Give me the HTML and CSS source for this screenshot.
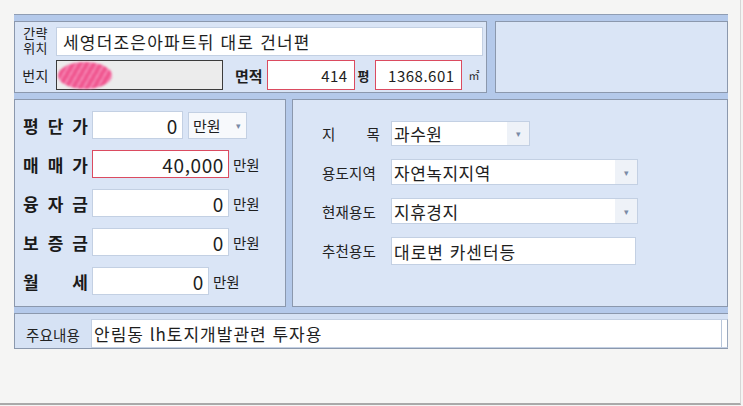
FILE: index.html
```html
<!DOCTYPE html>
<html lang="ko">
<head>
<meta charset="utf-8">
<link rel="stylesheet" href="styles.css">
</head>
<body>
<div class="page">
  <div class="frame">
    <div class="row-top">
      <div class="panel panel-loc">
        <div class="line">
          <div class="lbl-small two"><span class="ln">간략</span><span class="ln">위치</span></div>
          <div class="field field-addr">세영더조은아파트뒤 대로 건너편</div>
        </div>
        <div class="line">
          <div class="lbl-small">번지</div>
          <div class="field field-lot"><span class="blot"></span></div>
          <div class="lbl-bold area">면적</div>
          <div class="field red num w-pyeong">414</div>
          <div class="unit-s">평</div>
          <div class="field red num w-m2">1368.601</div>
          <div class="unit-m2">㎡</div>
        </div>
      </div>
      <div class="panel panel-empty"></div>
    </div>

    <div class="row-mid">
      <div class="panel panel-price">
        <div class="prow">
          <div class="plabel"><span>평</span><span>단</span><span>가</span></div>
          <div class="field num big w-short">0</div>
          <div class="select sel-unit"><span>만원</span><span class="arrow">▾</span></div>
        </div>
        <div class="prow">
          <div class="plabel"><span>매</span><span>매</span><span>가</span></div>
          <div class="field num big red w-long">40,000</div>
          <div class="unit">만원</div>
        </div>
        <div class="prow">
          <div class="plabel"><span>융</span><span>자</span><span>금</span></div>
          <div class="field num big w-long">0</div>
          <div class="unit">만원</div>
        </div>
        <div class="prow">
          <div class="plabel"><span>보</span><span>증</span><span>금</span></div>
          <div class="field num big w-long">0</div>
          <div class="unit">만원</div>
        </div>
        <div class="prow">
          <div class="plabel"><span>월</span><span>세</span></div>
          <div class="field num big w-mid">0</div>
          <div class="unit">만원</div>
        </div>
      </div>

      <div class="panel panel-land">
        <div class="lrow">
          <div class="llabel"><span>지</span><span>목</span></div>
          <div class="select sel-a"><span class="sel-text">과수원</span><span class="arrow-box">▾</span></div>
        </div>
        <div class="lrow">
          <div class="llabel"><span>용도지역</span></div>
          <div class="select sel-b"><span class="sel-text">자연녹지지역</span><span class="arrow-box">▾</span></div>
        </div>
        <div class="lrow">
          <div class="llabel"><span>현재용도</span></div>
          <div class="select sel-b"><span class="sel-text">지휴경지</span><span class="arrow-box">▾</span></div>
        </div>
        <div class="lrow">
          <div class="llabel"><span>추천용도</span></div>
          <div class="field field-rec">대로변 카센터등</div>
        </div>
      </div>
    </div>

    <div class="row-bottom">
      <div class="memo-label">주요내용</div>
      <div class="field field-memo">안림동 lh토지개발관련 투자용</div>
    </div>
  </div>
</div>
</body>
</html>
```

FILE: styles.css
```css
* { box-sizing: border-box; }

html, body {
  margin: 0;
  padding: 0;
  background: #f4f4f3;
  font-family: "Noto Sans CJK KR", "Noto Sans", sans-serif;
  color: #1e1e1e;
}

.page {
  width: 741px;
  height: 405px;
  padding: 14px 0 0 14px;
  background: #f5f5f4;
  border-right: 1px solid #d6d6d6;
  border-bottom: 2px solid #a9a9a9;
}

.frame {
  width: 714px;
  background: #b4c9ea;
  border-top: 1px solid #8f9db3;
  padding-top: 6px;
  display: flex;
  flex-direction: column;
  gap: 6px;
}

.panel {
  background: #dae5f6;
  border: 1px solid #8b98ad;
}

/* ---------- top row ---------- */
.row-top {
  display: flex;
  gap: 8px;
  height: 72px;
}

.panel-loc {
  width: 473px;
  padding: 5px 3px 0 0;
  display: flex;
  flex-direction: column;
  gap: 4px;
}

.panel-empty {
  flex: 1;
}

.line {
  display: flex;
  align-items: center;
}

.lbl-small {
  width: 41px;
  text-align: center;
  font-size: 14px;
  line-height: 16px;
  color: #222;
  letter-spacing: 0.3px;
}

.lbl-small.two {
  display: flex;
  flex-direction: column;
  align-items: center;
  gap: 1px;
  font-size: 13px;
  font-family: "Liberation Sans", "Noto Sans CJK KR", sans-serif;
}

.ln {
  display: block;
  height: 14px;
  line-height: 14px;
}

.field {
  background: #ffffff;
  border: 1px solid #c3d0e3;
  height: 28px;
  display: flex;
  align-items: center;
  padding: 0 6px;
  font-size: 17px;
  white-space: nowrap;
}

.field-addr {
  width: 427px;
  height: 29px;
  letter-spacing: 1.2px;
}

.field-lot {
  width: 167px;
  height: 30px;
  background: #ececec;
  border: 1px solid #3c3c3c;
  position: relative;
}

.blot {
  position: absolute;
  left: 1px;
  top: 1px;
  width: 54px;
  height: 27px;
  border-radius: 50%;
  background: repeating-linear-gradient(120deg, #f0568f 0 4px, #f687b5 4px 6px);
  filter: blur(1px);
}

.lbl-bold {
  font-weight: bold;
  font-size: 15px;
}

.area {
  margin-left: 12px;
  margin-right: 4px;
}

.red {
  border: 1px solid #db4b60;
}

.num {
  justify-content: flex-end;
  font-size: 15px;
  letter-spacing: 0.5px;
}

.w-pyeong {
  width: 88px;
  height: 30px;
}

.w-m2 {
  width: 87px;
  height: 30px;
}

.unit-s {
  font-size: 13px;
  font-weight: bold;
  margin: 0 5px 0 3px;
}

.unit-m2 {
  font-size: 11px;
  margin-left: 7px;
}

/* ---------- middle row ---------- */
.row-mid {
  display: flex;
  gap: 6px;
  height: 208px;
}

.panel-price {
  width: 272px;
  padding: 11px 0 0 8px;
  display: flex;
  flex-direction: column;
  gap: 11px;
}

.prow {
  display: flex;
  align-items: center;
  height: 28px;
}

.plabel {
  width: 65px;
  display: flex;
  justify-content: space-between;
  font-weight: bold;
  font-size: 17px;
  color: #1a1a1a;
  margin-right: 4px;
}

.big {
  font-size: 19px;
  padding-right: 4px;
  letter-spacing: 0.6px;
}

.w-short { width: 91px; }
.w-long { width: 137px; }
.w-mid { width: 117px; }

.unit {
  font-size: 14.5px;
  margin-left: 4px;
}

.select {
  display: flex;
  align-items: center;
  background: #ffffff;
  border: 1px solid #c3d0e3;
  font-size: 15px;
}

.sel-unit {
  width: 59px;
  height: 27px;
  margin-left: 5px;
  padding-left: 4px;
  justify-content: space-between;
  background: #f7f9fc;
}

.arrow {
  font-size: 9px;
  color: #7a8ba6;
  width: 16px;
  text-align: center;
}

.panel-land {
  flex: 1;
  padding: 20px 0 0 29px;
  display: flex;
  flex-direction: column;
  gap: 13px;
}

.lrow {
  display: flex;
  align-items: center;
  height: 26px;
}

.llabel {
  width: 58px;
  margin-right: 11px;
  display: flex;
  justify-content: space-between;
  font-size: 14.5px;
  color: #222;
  letter-spacing: 0.2px;
}

.sel-a { width: 139px; height: 25px; }
.sel-b { width: 247px; height: 26px; }

.sel-text {
  flex: 1;
  padding-left: 2px;
  font-size: 17px;
  letter-spacing: 0.5px;
}

.arrow-box {
  width: 22px;
  height: 100%;
  display: flex;
  align-items: center;
  justify-content: center;
  background: #eef2f8;
  font-size: 9px;
  color: #7a8ba6;
}

.field-rec {
  width: 245px;
  height: 28px;
  margin-top: 2px;
  padding-left: 2px;
  letter-spacing: 1px;
}

/* ---------- bottom row ---------- */
.row-bottom {
  display: flex;
  align-items: flex-end;
  height: 36px;
  background: #d6e2f4;
  border: 1px solid #8b98ad;
  border-right: none;
}

.memo-label {
  width: 76px;
  align-self: center;
  padding-top: 6px;
  text-align: center;
  font-size: 14.5px;
  color: #222;
  letter-spacing: 0.2px;
}

.field-memo {
  flex: 1;
  height: 29px;
  padding-left: 2px;
  letter-spacing: 1px;
  box-shadow: inset -5px 0 0 #ffffff, inset -6px 0 0 #b8c6da;
  border-right: 1px solid #9aa8bd;
}
```
